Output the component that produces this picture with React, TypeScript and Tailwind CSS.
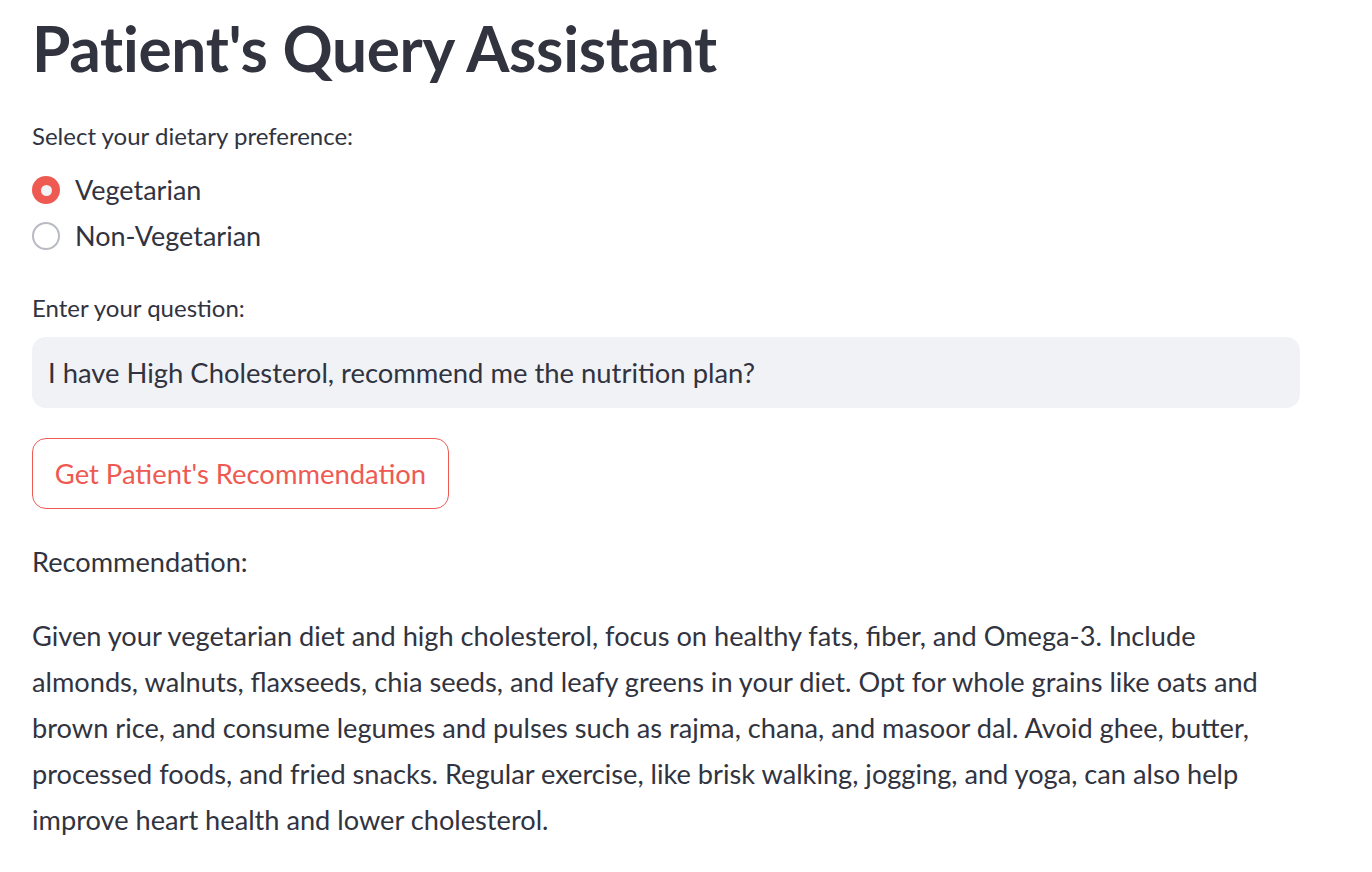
import React from "react";

export default function App() {
  const font = { fontFamily: '"Lato", "Liberation Sans", sans-serif' };
  const lines = [
    "Given your vegetarian diet and high cholesterol, focus on healthy fats, fiber, and Omega-3. Include",
    "almonds, walnuts, flaxseeds, chia seeds, and leafy greens in your diet. Opt for whole grains like oats and",
    "brown rice, and consume legumes and pulses such as rajma, chana, and masoor dal. Avoid ghee, butter,",
    "processed foods, and fried snacks. Regular exercise, like brisk walking, jogging, and yoga, can also help",
    "improve heart health and lower cholesterol.",
  ];
  return (
    <div className="w-[1372px] h-[872px] bg-white text-[#31333f] overflow-hidden" style={font}>
      <div className="pl-[32px] pr-[73px] flex flex-col">
        <h1 className="h-[96px] flex items-center text-[62.2px] font-bold tracking-[-0.3px] leading-none">Patient's Query Assistant</h1>
        <div className="h-[34px] mt-[23px] flex items-center text-[24px]">Select your dietary preference:</div>
        <div className="mt-[14px] flex flex-col">
          <label className="h-[46px] flex items-center gap-[15px] text-[27px]">
            <span className="w-[28px] h-[28px] rounded-full bg-[#ee5a52] flex items-center justify-center">
              <span className="w-[11px] h-[11px] rounded-full bg-[#f0f2f6]" />
            </span>
            Vegetarian
          </label>
          <label className="h-[46px] flex items-center gap-[15px] text-[27px]">
            <span className="w-[28px] h-[28px] rounded-full border-2 border-[#b8bbc2] bg-white" />
            Non-Vegetarian
          </label>
        </div>
        <div className="h-[34px] mt-[32px] flex items-center text-[24px]">Enter your question:</div>
        <div className="mt-[12px] h-[71px] w-[1268px] rounded-[14px] bg-[#f0f2f6] flex items-center px-[16px] text-[27.4px]">
          I have High Cholesterol, recommend me the nutrition plan?
        </div>
        <button className="mt-[30px] h-[71px] w-[417px] rounded-[14px] border border-[#ee5a52] text-[#ee5a52] text-[27.4px] flex items-center justify-center bg-white">
          Get Patient's Recommendation
        </button>
        <div className="mt-[30px] h-[46px] flex items-center text-[27.2px]">Recommendation:</div>
        <p className="mt-[28px] text-[27.2px] leading-[46px] whitespace-nowrap">
          {lines.map((l, i) => (
            <React.Fragment key={i}>
              {l}
              {i < lines.length - 1 && <br />}
            </React.Fragment>
          ))}
        </p>
      </div>
    </div>
  );
}
